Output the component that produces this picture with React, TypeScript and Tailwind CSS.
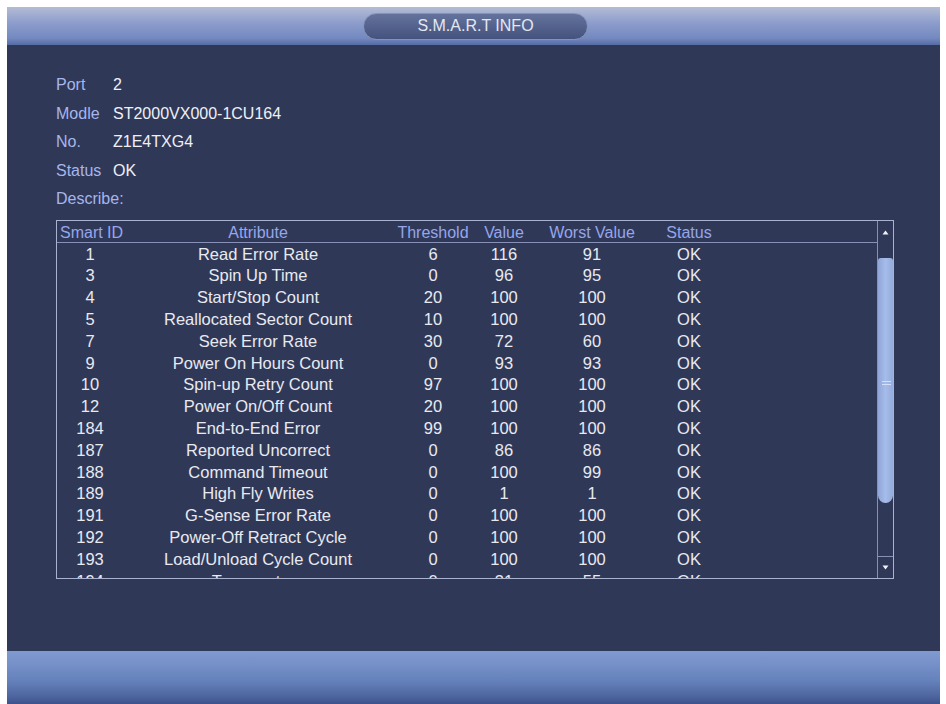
const info = [
  { label: 'Port', value: '2' },
  { label: 'Modle', value: 'ST2000VX000-1CU164' },
  { label: 'No.', value: 'Z1E4TXG4' },
  { label: 'Status', value: 'OK' },
  { label: 'Describe:', value: '' },
];

const rows = [
  ['1', 'Read Error Rate', '6', '116', '91', 'OK'],
  ['3', 'Spin Up Time', '0', '96', '95', 'OK'],
  ['4', 'Start/Stop Count', '20', '100', '100', 'OK'],
  ['5', 'Reallocated Sector Count', '10', '100', '100', 'OK'],
  ['7', 'Seek Error Rate', '30', '72', '60', 'OK'],
  ['9', 'Power On Hours Count', '0', '93', '93', 'OK'],
  ['10', 'Spin-up Retry Count', '97', '100', '100', 'OK'],
  ['12', 'Power On/Off Count', '20', '100', '100', 'OK'],
  ['184', 'End-to-End Error', '99', '100', '100', 'OK'],
  ['187', 'Reported Uncorrect', '0', '86', '86', 'OK'],
  ['188', 'Command Timeout', '0', '100', '99', 'OK'],
  ['189', 'High Fly Writes', '0', '1', '1', 'OK'],
  ['191', 'G-Sense Error Rate', '0', '100', '100', 'OK'],
  ['192', 'Power-Off Retract Cycle', '0', '100', '100', 'OK'],
  ['193', 'Load/Unload Cycle Count', '0', '100', '100', 'OK'],
  ['194', 'Temperature', '0', '31', '55', 'OK'],
];

const cols = 'grid grid-cols-[66px_270px_80px_62px_114px_80px_1fr]';

export default function App() {
  return (
    <div className="h-[704px] w-[946px] bg-white pl-[7px] pt-[7px] font-['Liberation_Sans',Arial,sans-serif]">
      <div className="flex h-[697px] w-[933px] flex-col">
        {/* Title bar */}
        <div className="flex h-[38px] items-center justify-center bg-[linear-gradient(to_bottom,#b4bcd4_0%,#8e9ecc_40%,#7489c0_82%,#566ca4_100%)]">
          <div className="ml-[4px] flex h-[27px] w-[225px] items-center justify-center rounded-full border border-[#8593bb] bg-[linear-gradient(to_bottom,#64739c,#44527e)] text-[16px] text-[#e4e8f2]">
            S.M.A.R.T INFO
          </div>
        </div>

        {/* Body */}
        <div className="flex-1 bg-[#303858] pl-[49px] pt-[26px]">
          {info.map((item) => (
            <div key={item.label} className="flex h-[28.5px] items-center text-[16px]">
              <span className="w-[57px] text-[#a6b6ec]">{item.label}</span>
              <span className="text-[#eef0f5]">{item.value}</span>
            </div>
          ))}

          <div className="mt-[6.5px] flex h-[359px] w-[838px] border border-[#aab2d2]">
            <div className="flex w-[820px] flex-col">
              <div className={`${cols} h-[22px] items-center whitespace-nowrap border-b border-[#8890b8] text-[16px] text-[#96a6ea]`}>
                <span className="pl-[3px]">Smart ID</span>
                <span className="text-center">Attribute</span>
                <span className="text-center">Threshold</span>
                <span className="text-center">Value</span>
                <span className="text-center">Worst Value</span>
                <span className="text-center">Status</span>
                <span />
              </div>
              <div className="flex-1 overflow-hidden">
                {rows.map((r) => (
                  <div key={r[0]} className={`${cols} h-[21.8px] items-center whitespace-nowrap text-[16.5px] text-[#e8eaf0]`}>
                    {r.map((c, i) => (
                      <span key={i} className="text-center leading-none">{c}</span>
                    ))}
                    <span />
                  </div>
                ))}
              </div>
            </div>

            {/* Scrollbar */}
            <div className="flex w-[16px] flex-col border-l border-[#8890b8]">
              <div className="flex h-[22px] items-center justify-center">
                <svg width="7" height="5" viewBox="0 0 7 5">
                  <path d="M3.5 0.5 L6.5 4.5 L0.5 4.5 Z" fill="#f0f2f8" />
                </svg>
              </div>
              <div className="relative mt-[15px] h-[245px] rounded-t-[3px] rounded-b-[8px] bg-[linear-gradient(to_right,#8ea6d8,#a6bcea_50%,#94acdc)]">
                <div className="absolute left-[4px] right-[2px] top-[123px] flex flex-col gap-[2px]">
                  <div className="h-[1px] bg-[#d4e0fa]" />
                  <div className="h-[1px] bg-[#d4e0fa]" />
                </div>
              </div>
              <div className="flex-1" />
              <div className="flex h-[22px] items-center justify-center border-t border-[#8890b8]">
                <svg width="7" height="5" viewBox="0 0 7 5">
                  <path d="M0.5 0.5 L6.5 0.5 L3.5 4.5 Z" fill="#f0f2f8" />
                </svg>
              </div>
            </div>
          </div>
        </div>

        {/* Bottom bar */}
        <div className="h-[53px] bg-[linear-gradient(to_bottom,#809bd0_0%,#7690c8_25%,#6682bc_55%,#4e66a0_85%,#3c528c_100%)]" />
      </div>
    </div>
  );
}
